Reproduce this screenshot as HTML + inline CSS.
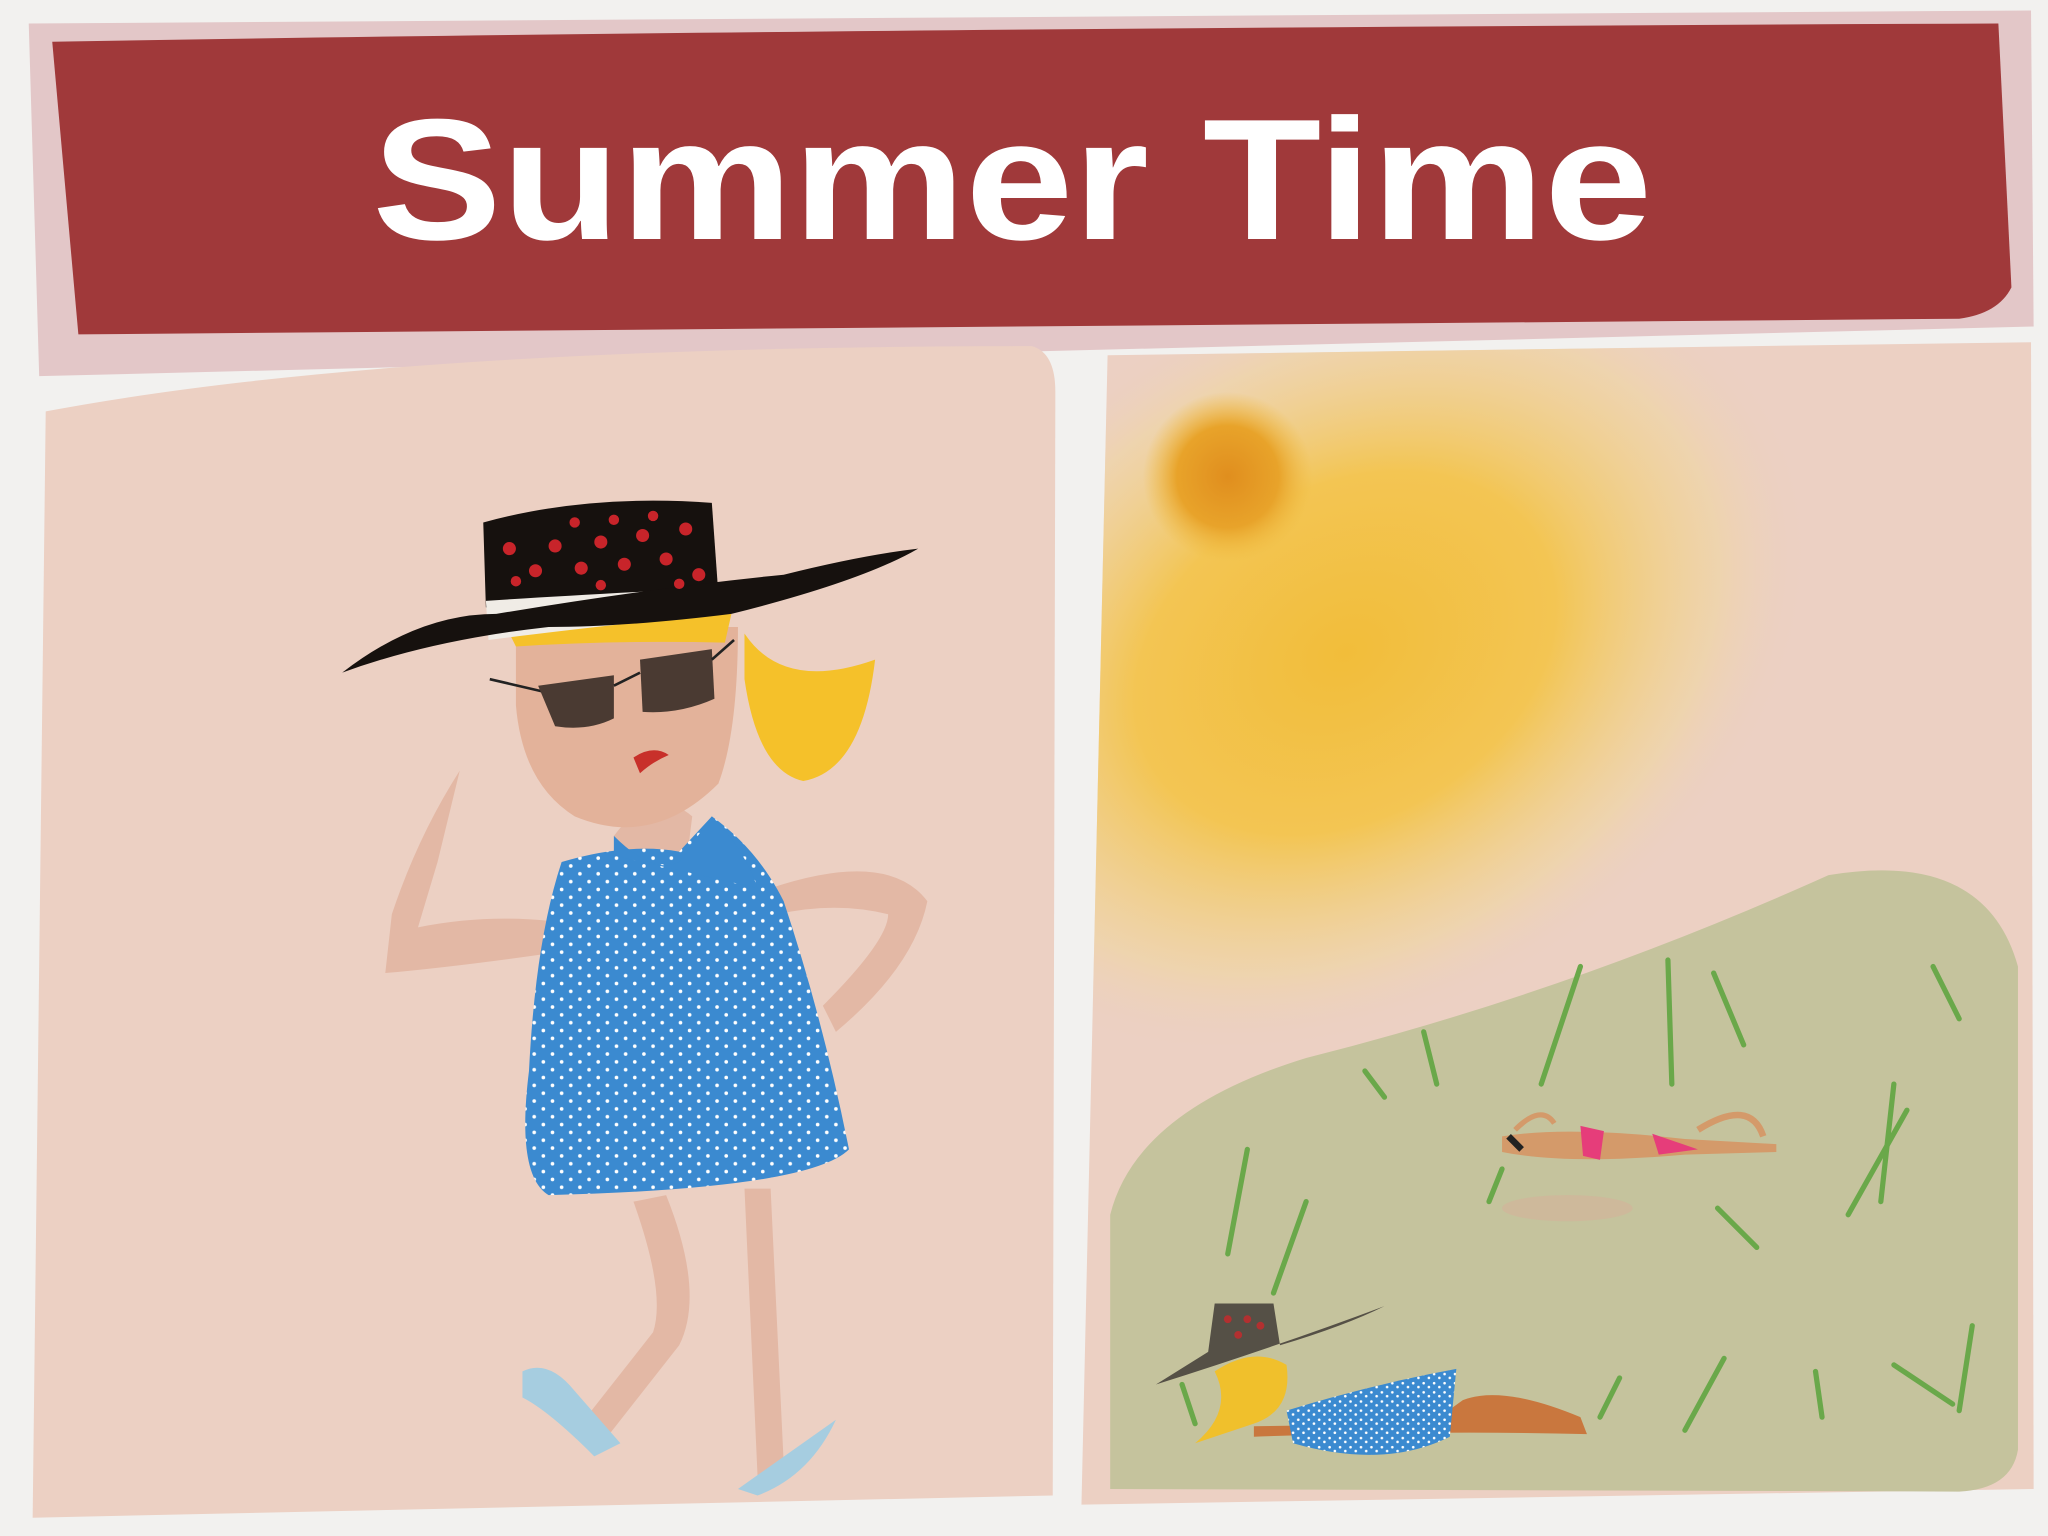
<!DOCTYPE html>
<html><head><meta charset="utf-8"><style>
html,body{margin:0;padding:0;background:#f2f1ef}
svg{display:block}
</style></head><body>
<svg width="2048" height="1536" viewBox="0 0 1568 1176" xmlns="http://www.w3.org/2000/svg">
<defs>
<radialGradient id="glow" cx="1030" cy="500" r="330" gradientUnits="userSpaceOnUse" gradientTransform="translate(1030 500) rotate(-30) scale(1.15 0.85) translate(-1030 -500)">
<stop offset="0" stop-color="#f2bd3a"/><stop offset="0.45" stop-color="#f3c553"/><stop offset="0.8" stop-color="#f0d6a0" stop-opacity="0.6"/><stop offset="1" stop-color="#ecd0c3" stop-opacity="0"/>
</radialGradient>
<radialGradient id="sun" cx="940" cy="365" r="65" gradientUnits="userSpaceOnUse">
<stop offset="0" stop-color="#e08e1e"/><stop offset="0.6" stop-color="#e8a32a"/><stop offset="1" stop-color="#f0bb3e" stop-opacity="0"/>
</radialGradient>
<pattern id="dots" width="14" height="12" patternUnits="userSpaceOnUse">
<rect width="14" height="12" fill="#3b8ad0"/><circle cx="3" cy="3" r="1.4" fill="#fff"/><circle cx="10" cy="9" r="1.4" fill="#fff"/>
</pattern>
<pattern id="dots2" width="8" height="7" patternUnits="userSpaceOnUse">
<rect width="8" height="7" fill="#3b8ad0"/><circle cx="2" cy="2" r="1" fill="#fff"/><circle cx="6" cy="5" r="1" fill="#fff"/>
</pattern>
</defs>
<rect width="1568" height="1176" fill="#f2f1ef"/>
<!-- banner -->
<path d="M22 18 L1555 8 L1557 250 L30 288 Z" fill="#e3c7c8"/>
<path d="M40 32 Q600 22 1530 18 L1540 220 Q1530 240 1500 244 L60 256 Z" fill="#a0393a"/>
<text x="775" y="183" text-anchor="middle" font-family="Liberation Sans, sans-serif" font-weight="bold" font-size="132" fill="#fff" textLength="980" lengthAdjust="spacingAndGlyphs">Summer Time</text>
<!-- left panel -->
<path d="M35 315 Q300 265 790 265 Q808 270 808 300 L806 1145 L25 1162 Z" fill="#ecd0c3"/>
<!-- right panel -->
<path d="M848 272 L1555 262 L1557 1140 L828 1152 Z" fill="#ecd0c3"/>
<path d="M848 272 L1555 262 L1557 1140 L828 1152 Z" fill="url(#glow)"/>
<circle cx="940" cy="365" r="65" fill="url(#sun)"/>
<path d="M850 1140 L850 930 Q870 850 1000 810 Q1200 760 1400 670 Q1520 650 1545 740 L1545 1110 Q1540 1140 1500 1142 Z" fill="#c5c39d"/>
<!-- grass -->
<g stroke="#6aa84a" stroke-width="4" fill="none" stroke-linecap="round">
<path d="M1280 830 L1277 735"/><path d="M1335 800 L1312 745"/><path d="M1180 830 L1210 740"/><path d="M1440 920 L1450 830"/><path d="M1415 930 L1460 850"/><path d="M1500 780 L1480 740"/><path d="M1345 955 L1315 925"/><path d="M1060 840 L1045 820"/><path d="M1100 830 L1090 790"/><path d="M940 960 L955 880"/><path d="M975 990 L1000 920"/><path d="M1290 1095 L1320 1040"/><path d="M1500 1080 L1510 1015"/><path d="M1495 1075 L1450 1045"/><path d="M1225 1085 L1240 1055"/><path d="M1140 920 L1150 895"/><path d="M1395 1085 L1390 1050"/><path d="M915 1090 L905 1060"/>
</g>
<!-- sunbather -->
<ellipse cx="1200" cy="925" rx="50" ry="10" fill="#d4b29a" opacity="0.6"/>
<path d="M1150 870 Q1200 862 1290 872 L1360 876 L1360 882 L1290 884 Q1200 892 1150 882 Z" fill="#d49a6a"/>
<path d="M1265 868 L1300 880 L1270 884 Z" fill="#e63d7a"/>
<path d="M1210 862 L1228 866 L1225 888 L1212 885 Z" fill="#e63d7a"/>
<path d="M1300 865 Q1340 840 1350 870" stroke="#d49a6a" stroke-width="5" fill="none"/>
<path d="M1160 865 Q1180 845 1190 860" stroke="#d49a6a" stroke-width="4" fill="none"/>
<path d="M1155 870 L1165 880" stroke="#222" stroke-width="5"/>
<!-- small lying woman -->
<path d="M960 1100 Q1100 1095 1215 1098 L1210 1085 Q1150 1060 1120 1072 L1095 1090 L960 1092 Z" fill="#c9773e"/>
<path d="M985 1080 Q1050 1060 1115 1048 L1110 1100 Q1060 1125 990 1105 Z" fill="url(#dots2)"/>
<path d="M930 1050 Q960 1030 985 1045 Q990 1080 960 1090 L915 1105 Q945 1080 930 1050 Z" fill="#f0c02c"/>
<path d="M885 1060 Q980 1030 1060 1000 Q1030 1015 980 1030 L975 998 L930 998 L925 1035 Z" fill="#555046"/>
<g fill="#b23030"><circle cx="940" cy="1010" r="3"/><circle cx="955" cy="1010" r="3"/><circle cx="965" cy="1015" r="3"/><circle cx="948" cy="1022" r="3"/></g>
<!-- left character: arms -->
<path d="M300 700 Q320 640 352 590 L335 660 L320 710 Q370 700 420 705 L420 730 Q350 740 295 745 Z" fill="#e3b8a5"/>
<path d="M590 680 Q680 650 710 690 Q700 740 640 790 L630 770 Q680 720 680 700 Q640 690 595 700 Z" fill="#e3b8a5"/>
<!-- legs -->
<path d="M485 920 L510 915 Q540 990 520 1030 L465 1100 L445 1090 L500 1020 Q510 990 485 920 Z" fill="#e3b8a5"/>
<path d="M570 910 L590 910 L600 1120 L580 1130 Z" fill="#e3b8a5"/>
<path d="M400 1050 Q420 1040 440 1065 L475 1105 L455 1115 Q420 1080 400 1070 Z" fill="#a6cde0"/>
<path d="M565 1140 L640 1087 Q620 1130 580 1145 Z" fill="#a6cde0"/>
<!-- neck -->
<path d="M470 640 Q500 600 530 625 L525 665 L485 660 Z" fill="#e3b8a5"/>
<!-- dress -->
<path d="M430 660 Q480 645 520 652 L545 625 Q580 650 600 690 Q630 780 650 880 Q620 910 420 915 Q395 900 405 820 Q410 720 430 660 Z" fill="url(#dots)"/>
<path d="M470 640 Q500 670 520 660 L545 625 Q570 650 580 680 L470 655 Z" fill="#3b8ad0"/>
<!-- face -->
<path d="M395 480 L565 480 Q565 560 550 600 Q500 650 440 625 Q400 600 395 540 Z" fill="#e3b29a"/>
<!-- hair -->
<path d="M570 485 Q600 530 670 505 Q660 590 615 598 Q580 590 570 520 Z" fill="#f5c12a"/>
<path d="M390 485 Q470 475 560 470 L555 492 Q470 490 395 495 Z" fill="#f5c12a"/>
<!-- glasses -->
<path d="M375 520 L418 530" stroke="#222" stroke-width="2"/>
<path d="M412 525 L470 517 L470 550 Q450 560 425 556 Z" fill="#4a3a32"/>
<path d="M490 505 L545 497 L547 535 Q520 547 492 545 Z" fill="#4a3a32"/>
<path d="M470 525 L490 515 M545 505 L562 490" stroke="#222" stroke-width="2"/>
<path d="M485 580 Q500 570 512 578 Q500 583 490 592 Z" fill="#c8302a"/>
<!-- hat -->
<path d="M370 400 Q450 378 545 385 L550 455 Q450 470 372 465 Z" fill="#16110e"/>
<path d="M372 460 Q450 455 550 450 L552 470 Q450 480 374 490 Z" fill="#f0ece6"/>
<path d="M262 515 Q320 470 380 470 Q500 450 600 440 Q660 425 703 420 Q660 445 560 470 Q480 480 420 480 Q330 490 262 515 Z" fill="#16110e"/>
<g fill="#c8242a">
<circle cx="390" cy="420" r="5"/><circle cx="410" cy="437" r="5"/><circle cx="425" cy="418" r="5"/><circle cx="445" cy="435" r="5"/><circle cx="460" cy="415" r="5"/><circle cx="478" cy="432" r="5"/><circle cx="492" cy="410" r="5"/><circle cx="510" cy="428" r="5"/><circle cx="525" cy="405" r="5"/><circle cx="535" cy="440" r="5"/><circle cx="500" cy="395" r="4"/><circle cx="470" cy="398" r="4"/><circle cx="440" cy="400" r="4"/><circle cx="395" cy="445" r="4"/><circle cx="460" cy="448" r="4"/><circle cx="520" cy="447" r="4"/>
</g>
</svg>
</body></html>
